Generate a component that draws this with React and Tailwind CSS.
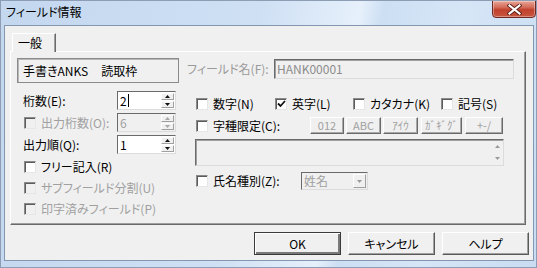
import React from "react";

const FONT = "font-['Noto_Sans_CJK_JP','Noto_Sans',sans-serif] [font-feature-settings:'palt'] whitespace-nowrap";

function Check({ checked, disabled }) {
  return (
    <span
      className={`w-[12px] h-[12px] shrink-0 flex items-center justify-center border border-t-[#8a8a8a] border-l-[#8a8a8a] border-r-[#e6e6e6] border-b-[#e6e6e6] shadow-[inset_1px_1px_0_#5c5c5c] ${
        disabled ? "bg-[#f0f0f0]" : "bg-white"
      }`}
    >
      {checked && (
        <svg width="9" height="8" viewBox="0 0 9 8">
          <path d="M1 3.5 L3.5 6 L8 1" fill="none" stroke="#111" strokeWidth="1.8" />
        </svg>
      )}
    </span>
  );
}

function Tri({ up, color }) {
  return (
    <svg width="5" height="3" viewBox="0 0 5 3">
      <path d={up ? "M0 3 L2.5 0 L5 3 Z" : "M0 0 L2.5 3 L5 0 Z"} fill={color} />
    </svg>
  );
}

function Spin({ value, disabled, caret }) {
  const c = disabled ? "#a8a8a8" : "#111";
  return (
    <div
      className={`w-[59px] h-[19px] flex border border-t-[#6a6a6a] border-l-[#6a6a6a] border-r-[#dcdcdc] border-b-[#dcdcdc] ${
        disabled ? "bg-[#f0f0f0]" : "bg-white"
      }`}
    >
      <div
        className={`flex-1 flex items-center pl-[2px] text-[12px] leading-none ${
          disabled ? "text-[#a0a0a0]" : "text-black"
        }`}
      >
        {value}
        {caret && <span className="w-px h-[13px] bg-black ml-[1px]" />}
      </div>
      <div className="w-[15px] flex flex-col p-[1px] gap-[1px]">
        <div className="flex-1 flex items-center justify-center bg-[#f0f0f0] border border-t-white border-l-white border-r-[#a0a0a0] border-b-[#a0a0a0]">
          <Tri up color={c} />
        </div>
        <div className="flex-1 flex items-center justify-center bg-[#f0f0f0] border border-t-white border-l-white border-r-[#a0a0a0] border-b-[#a0a0a0]">
          <Tri color={c} />
        </div>
      </div>
    </div>
  );
}

function CheckRow({ label, disabled, checked, className = "" }) {
  return (
    <div className={`flex items-center gap-[5px] ${className}`}>
      <Check checked={checked} disabled={disabled} />
      <span className={`text-[12px] leading-none ${disabled ? "text-[#a0a0a0]" : "text-black"}`}>
        {label}
      </span>
    </div>
  );
}

function SmallBtn({ label, w }) {
  return (
    <div
      className={`${w} h-[17px] flex items-center justify-center bg-[#f0f0f0] border border-t-white border-l-white border-r-[#6a6a6a] border-b-[#6a6a6a] shadow-[inset_-1px_-1px_0_#a8a8a8] text-[11px] leading-none text-[#a0a0a0]`}
    >
      {label}
    </div>
  );
}

function DlgBtn({ label, def }) {
  return (
    <div
      className={`w-[87px] h-[23px] flex items-center justify-center bg-[#f0f0f0] text-[12px] leading-none text-black border ${
        def
          ? "border-[#3a3a3a] shadow-[inset_1px_1px_0_#ffffff,inset_-2px_-2px_0_#7a7a7a]"
          : "border-t-white border-l-white border-r-[#5a5a5a] border-b-[#5a5a5a] shadow-[inset_-1px_-1px_0_#a0a0a0]"
      }`}
    >
      {label}
    </div>
  );
}

export default function App() {
  return (
    <div
      className={`w-[537px] h-[268px] flex flex-col ${FONT} bg-[linear-gradient(100deg,#c3d7ef_0%,#cfe0f4_45%,#e6f0fb_62%,#cddff3_66%,#d6e6f7_80%,#c9dcf1_100%)] border border-[#8c9db4] overflow-hidden`}
    >
      {/* title bar */}
      <div className="h-[24px] flex justify-between shrink-0">
        <div className="pl-[5px] pt-[5px] text-[12px] leading-none text-black">フィールド情報</div>
        <div className="w-[44px] h-[18px] -mt-px rounded-b-[4px] border border-[#6e2a22] bg-[linear-gradient(180deg,#e9a597_0%,#d36b58_40%,#c0412d_55%,#c8553f_100%)] flex items-center justify-center shadow-[inset_0_0_0_1px_rgba(255,255,255,0.35)]">
          <svg width="15" height="11" viewBox="0 0 15 11">
            <path d="M2.5 1.5 L12.5 9.5 M12.5 1.5 L2.5 9.5" stroke="#5a1d16" strokeWidth="4" strokeLinecap="square" />
            <path d="M2.5 1.5 L12.5 9.5 M12.5 1.5 L2.5 9.5" stroke="#ffffff" strokeWidth="2.2" strokeLinecap="square" />
          </svg>
        </div>
      </div>

      {/* client area */}
      <div className="ml-[3px] mr-[2px] h-[236px] bg-[#f0f0f0] border border-[#8497b0] flex flex-col">
        {/* tab header */}
        <div className="flex pl-[7px] pt-[7px]">
          <div className="relative z-10 w-[44px] h-[19px] -mb-px bg-[#f0f0f0] border-t border-l border-t-white border-l-white border-r border-r-[#6a6a6a] shadow-[inset_-1px_0_0_#a0a0a0] flex items-start pl-[5px] pt-[3px] text-[12px] leading-none text-black">
            一般
          </div>
        </div>

        {/* tab panel */}
        <div className="ml-[5px] w-[516px] h-[174px] border border-t-white border-l-white border-r-[#6a6a6a] border-b-[#6a6a6a] shadow-[inset_-1px_-1px_0_#a0a0a0] flex pl-[6px] pt-[6px] gap-[8px]">
          {/* left column */}
          <div className="w-[162px] flex flex-col">
            <div className="h-[25px] border border-[#8a8a8a] shadow-[inset_1px_1px_0_#b8b8b8] flex items-center pl-[5px] text-[12px] leading-none text-black">
              <span>手書きANKS</span>
              <span className="ml-[13px]">読取枠</span>
            </div>
            <div className="mt-[8px] h-[19px] flex items-center">
              <div className="w-[100px] pl-[6px] text-[12px] leading-none text-black">桁数(E):</div>
              <Spin value="2" caret />
            </div>
            <div className="mt-[3px] h-[19px] flex items-center">
              <div className="w-[100px] pl-[7px]">
                <CheckRow label="出力桁数(O):" disabled />
              </div>
              <Spin value="6" disabled />
            </div>
            <div className="mt-[3px] h-[19px] flex items-center">
              <div className="w-[100px] pl-[6px] text-[12px] leading-none text-black">出力順(Q):</div>
              <Spin value="1" />
            </div>
            <div className="mt-[2px] flex flex-col pl-[7px]">
              <CheckRow label="フリー記入(R)" className="h-[21px]" />
              <CheckRow label="サブフィールド分割(U)" disabled className="h-[21px]" />
              <CheckRow label="印字済みフィールド(P)" disabled className="h-[21px]" />
            </div>
          </div>

          {/* right column */}
          <div className="flex-1 flex flex-col">
            <div className="mt-[1px] h-[20px] flex items-center">
              <div className="w-[87px] text-[12px] leading-none text-[#9a9a9a]">フィールド名(F):</div>
              <div className="w-[240px] h-[20px] flex items-center pl-[2px] border border-t-[#6a6a6a] border-l-[#6a6a6a] border-r-[#dcdcdc] border-b-[#dcdcdc] shadow-[inset_1px_1px_0_#a0a0a0] text-[12px] leading-none text-[#8c8c8c]">
                HANK00001
              </div>
            </div>

            <div className="mt-[16px] h-[18px] flex items-center pl-[9px]">
              <CheckRow label="数字(N)" className="w-[79px]" />
              <CheckRow label="英字(L)" checked className="w-[78px]" />
              <CheckRow label="カタカナ(K)" className="w-[88px]" />
              <CheckRow label="記号(S)" />
            </div>

            <div className="mt-[4px] h-[17px] flex items-center pl-[9px]">
              <CheckRow label="字種限定(C):" className="w-[114px]" />
              <SmallBtn label="012" w="w-[34px]" />
              <div className="w-[2px]" />
              <SmallBtn label="ABC" w="w-[35px]" />
              <div className="w-[2px]" />
              <SmallBtn label="ｱｲｳ" w="w-[35px]" />
              <div className="w-[3px]" />
              <SmallBtn label="ｶﾞｷﾞｸﾞ" w="w-[41px]" />
              <div className="w-[3px]" />
              <SmallBtn label="+-/" w="w-[38px]" />
            </div>

            <div className="mt-[5px] ml-[8px] w-[309px] h-[27px] flex justify-end border border-t-[#6a6a6a] border-l-[#6a6a6a] border-r-[#dcdcdc] border-b-[#dcdcdc] shadow-[inset_1px_1px_0_#a0a0a0]">
              <div className="w-[12px] flex flex-col items-center justify-between py-[5px]">
                <Tri up color="#9a9a9a" />
                <Tri color="#9a9a9a" />
              </div>
            </div>

            <div className="mt-[6px] h-[18px] flex items-center pl-[9px]">
              <CheckRow label="氏名種別(Z):" className="w-[105px]" />
              <div className="w-[67px] h-[18px] flex items-center border border-t-[#6a6a6a] border-l-[#6a6a6a] border-r-[#dcdcdc] border-b-[#dcdcdc]">
                <div className="flex-1 pl-[2px] text-[12px] leading-none text-[#a0a0a0]">姓名</div>
                <div className="w-[13px] h-[14px] mr-[1px] flex items-center justify-center border border-t-white border-l-white border-r-[#a0a0a0] border-b-[#a0a0a0]">
                  <Tri color="#9a9a9a" />
                </div>
              </div>
            </div>
          </div>
        </div>

        {/* dialog buttons */}
        <div className="mt-[7px] flex justify-end gap-[7px] pr-[4px]">
          <DlgBtn label="OK" def />
          <DlgBtn label="キャンセル" />
          <DlgBtn label="ヘルプ" />
        </div>
      </div>
    </div>
  );
}
